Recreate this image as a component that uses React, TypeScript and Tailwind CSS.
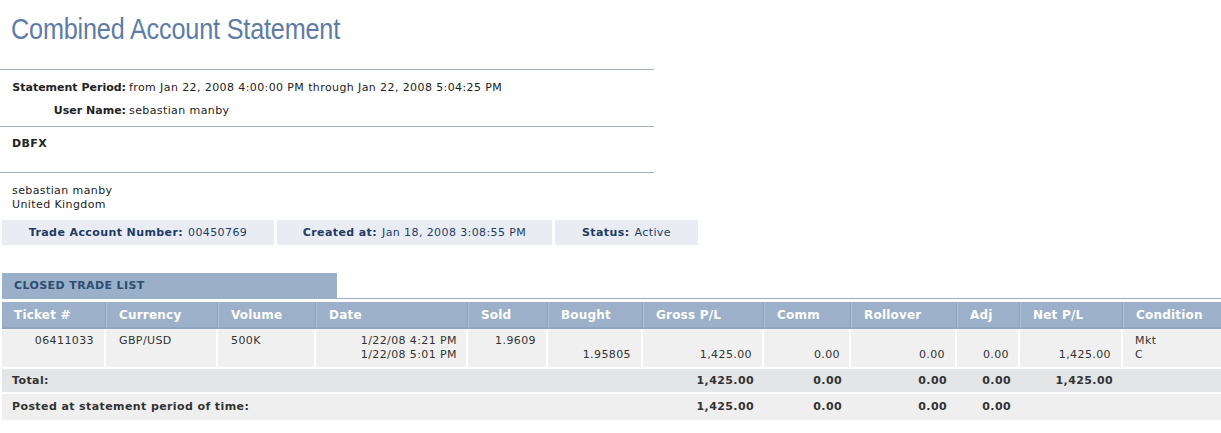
const cols = [104, 112, 98, 152, 80, 95, 121, 87, 106, 63, 103, 98];

const headers = [
  "Ticket #",
  "Currency",
  "Volume",
  "Date",
  "Sold",
  "Bought",
  "Gross P/L",
  "Comm",
  "Rollover",
  "Adj",
  "Net P/L",
  "Condition",
];

export default function App() {
  const cell = "h-[40px] align-top pt-[5px] border-r-2 border-b-2 border-white";
  const sum = "text-right font-bold border-b-2 border-white";
  return (
    <div className="w-[1221px] h-[433px] bg-white font-['DejaVu_Sans',sans-serif] text-[11px] leading-[14px] tracking-[0.4px] text-[#222]">
      {/* Title */}
      <div className="h-[69px] pl-[11px] pt-[12px]">
        <h1 className="inline-block origin-left scale-x-[0.84] text-[30px] leading-[34px] tracking-[-0.2px] text-[#5d7ba7] font-['Liberation_Sans',sans-serif]">
          Combined Account Statement
        </h1>
      </div>

      {/* Statement period */}
      <div className="w-[654px] border-t border-[#9db1c9] pt-[6px] pb-[4px]">
        <div className="grid grid-cols-[126px_1fr] gap-x-[3px]">
          <div className="h-[23px] flex items-center justify-end font-bold tracking-normal">Statement Period:</div>
          <div className="h-[23px] flex items-center">
            from Jan 22, 2008 4:00:00 PM through Jan 22, 2008 5:04:25 PM
          </div>
          <div className="h-[23px] flex items-center justify-end font-bold tracking-normal">User Name:</div>
          <div className="h-[23px] flex items-center">sebastian manby</div>
        </div>
      </div>

      {/* Company */}
      <div className="w-[654px] h-[47px] border-t border-b border-[#9db1c9] pl-[12px] pt-[10px] font-bold">
        DBFX
      </div>

      {/* Address */}
      <div className="pl-[12px] pt-[11px]">
        <div>sebastian manby</div>
        <div>United Kingdom</div>
      </div>

      {/* Account info bar */}
      <div className="mt-[8px] ml-[2px] flex gap-[3px] text-[#1d3b66]">
        <div className="w-[272px] h-[25px] bg-[#e9edf3] flex items-center justify-center">
          <span className="font-bold mr-[5px]">Trade Account Number:</span>00450769
        </div>
        <div className="w-[275px] h-[25px] bg-[#e9edf3] flex items-center justify-center">
          <span className="font-bold mr-[5px]">Created at:</span>Jan 18, 2008 3:08:55 PM
        </div>
        <div className="w-[143px] h-[25px] bg-[#e9edf3] flex items-center justify-center">
          <span className="font-bold mr-[5px]">Status:</span>Active
        </div>
      </div>

      {/* Tab */}
      <div className="mt-[28px] ml-[2px] border-b border-[#9ab0c8] flex">
        <div className="w-[335px] h-[25px] bg-[#9ab0c8] pl-[12px] flex items-center font-bold text-[#2b4d72]">
          CLOSED TRADE LIST
        </div>
      </div>

      {/* Table */}
      <table className="mt-[3px] ml-[2px] w-[1219px] table-fixed border-separate border-spacing-0">
        <colgroup>
          {cols.map((w, i) => (
            <col key={i} style={{ width: w }} />
          ))}
        </colgroup>
        <thead>
          <tr>
            {headers.map((h, i) => (
              <th
                key={h}
                className={
                  "h-[27px] pl-[12px] text-left font-bold text-[12px] tracking-[0.2px] text-white bg-[#9cb1c9] border-b-2 border-b-[#8ea6c1] " +
                  (i > 0 ? "border-l border-l-[#b2c3d6] " : "") +
                  (i < headers.length - 1 ? "border-r border-r-[#8ca3bf]" : "")
                }
              >
                {h}
              </th>
            ))}
          </tr>
        </thead>
        <tbody className="text-[#333]">
          <tr className="bg-[#f0f0f0]">
            <td className={cell + " text-right pr-[10px]"}>06411033</td>
            <td className={cell + " pl-[13px]"}>GBP/USD</td>
            <td className={cell + " pl-[13px]"}>500K</td>
            <td className={cell + " text-right pr-[9px]"}>
              1/22/08 4:21 PM
              <br />
              1/22/08 5:01 PM
            </td>
            <td className={cell + " text-right pr-[10px]"}>1.9609</td>
            <td className={cell + " text-right pr-[10px]"}>
              <br />
              1.95805
            </td>
            <td className={cell + " text-right pr-[10px]"}>
              <br />
              1,425.00
            </td>
            <td className={cell + " text-right pr-[9px]"}>
              <br />
              0.00
            </td>
            <td className={cell + " text-right pr-[10px]"}>
              <br />
              0.00
            </td>
            <td className={cell + " text-right pr-[9px]"}>
              <br />
              0.00
            </td>
            <td className={cell + " text-right pr-[10px]"}>
              <br />
              1,425.00
            </td>
            <td className="h-[40px] align-top pt-[5px] pl-[12px] border-b-2 border-white">
              Mkt
              <br />C
            </td>
          </tr>
          <tr className="bg-[#e3e5e7]">
            <td colSpan={6} className="h-[25px] pl-[10px] font-bold border-b-2 border-white">
              Total:
            </td>
            <td className={sum + " pr-[10px]"}>1,425.00</td>
            <td className={sum + " pr-[9px]"}>0.00</td>
            <td className={sum + " pr-[10px]"}>0.00</td>
            <td className={sum + " pr-[9px]"}>0.00</td>
            <td className={sum + " pr-[10px]"}>1,425.00</td>
            <td className="border-b-2 border-white" />
          </tr>
          <tr className="bg-[#efefef]">
            <td colSpan={6} className="h-[26px] pl-[10px] font-bold">
              Posted at statement period of time:
            </td>
            <td className="pr-[10px] text-right font-bold">1,425.00</td>
            <td className="pr-[9px] text-right font-bold">0.00</td>
            <td className="pr-[10px] text-right font-bold">0.00</td>
            <td className="pr-[9px] text-right font-bold">0.00</td>
            <td />
            <td />
          </tr>
        </tbody>
      </table>
    </div>
  );
}
